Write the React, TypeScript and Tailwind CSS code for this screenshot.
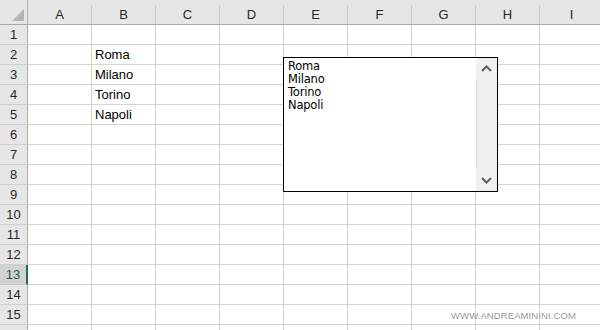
import React from "react";

const cols = ["A", "B", "C", "D", "E", "F", "G", "H", "I"];
const rows = Array.from({ length: 16 }, (_, i) => i + 1);
const cities: Record<number, string> = { 2: "Roma", 3: "Milano", 4: "Torino", 5: "Napoli" };

function ChevronUp() {
  return (
    <svg width="11" height="7" viewBox="0 0 11 7">
      <path d="M1 6 L5.5 1.5 L10 6" fill="none" stroke="#606060" strokeWidth="2" />
    </svg>
  );
}

function ChevronDown() {
  return (
    <svg width="11" height="7" viewBox="0 0 11 7">
      <path d="M1 1 L5.5 5.5 L10 1" fill="none" stroke="#606060" strokeWidth="2" />
    </svg>
  );
}

export default function App() {
  return (
    <div className="relative w-[600px] h-[330px] overflow-hidden bg-white font-['Liberation_Sans',Arial,sans-serif] text-[13px] text-black">
      {/* header row */}
      <div className="flex h-[25px] bg-[#e6e6e6] border-b border-[#ababab]">
        <div className="w-[28px] shrink-0 border-r border-[#ababab] flex items-end justify-end pr-[3px] pb-[3px]">
          <svg width="12" height="12" viewBox="0 0 12 12">
            <path d="M12 0 L12 12 L0 12 Z" fill="#b4b4b4" />
          </svg>
        </div>
        {cols.map((c) => (
          <div key={c} className="w-[64px] shrink-0 pt-[5px]">
            <div className="h-full border-r border-[#c8c8c8] flex items-center justify-center text-[#262626]">
              {c}
            </div>
          </div>
        ))}
      </div>

      {rows.map((r) => (
        <div key={r} className="flex h-[20px]">
          <div
            className={
              r === 13
                ? "w-[28px] shrink-0 bg-[#d2d2d2] border-b border-[#c6c6c6] border-r-2 border-r-[#217346] flex items-center justify-center text-[#1e5e3b]"
                : "w-[28px] shrink-0 bg-[#e6e6e6] border-b border-[#d0d0d0] border-r border-r-[#ababab] flex items-center justify-center text-[#262626]"
            }
          >
            {r <= 15 ? r : ""}
          </div>
          {cols.map((c) => (
            <div
              key={c}
              className="w-[64px] shrink-0 border-r border-b border-[#d4d4d4] pl-[3px] pt-[1px] leading-[18px]"
            >
              {c === "B" ? cities[r] ?? "" : ""}
            </div>
          ))}
        </div>
      ))}

      {/* list box control */}
      <div className="absolute left-[283px] top-[57px] w-[215px] h-[135px] border border-black bg-white flex">
        <div className="flex-1 pl-[4px] pt-[2px] text-[11.5px] leading-[13px] font-['DejaVu_Sans','Liberation_Sans',sans-serif] tracking-[-0.2px]">
          <div>Roma</div>
          <div>Milano</div>
          <div>Torino</div>
          <div>Napoli</div>
        </div>
        <div className="w-[21px] bg-[#f0f0f0] flex flex-col items-center">
          <div className="h-[22px] flex items-center justify-center w-full">
            <ChevronUp />
          </div>
          <div className="flex-1 w-full pb-[2px] pt-[1px]">
            <div className="h-[88px] border-l border-[#dcdcdc]" />
          </div>
          <div className="h-[22px] flex items-center justify-center w-full">
            <ChevronDown />
          </div>
        </div>
      </div>

      {/* watermark */}
      <div className="absolute left-[451px] top-[309px] text-[9.5px] text-[#9a9a9a] tracking-[0.1px]">
        WWW.ANDREAMININI.COM
      </div>
    </div>
  );
}
